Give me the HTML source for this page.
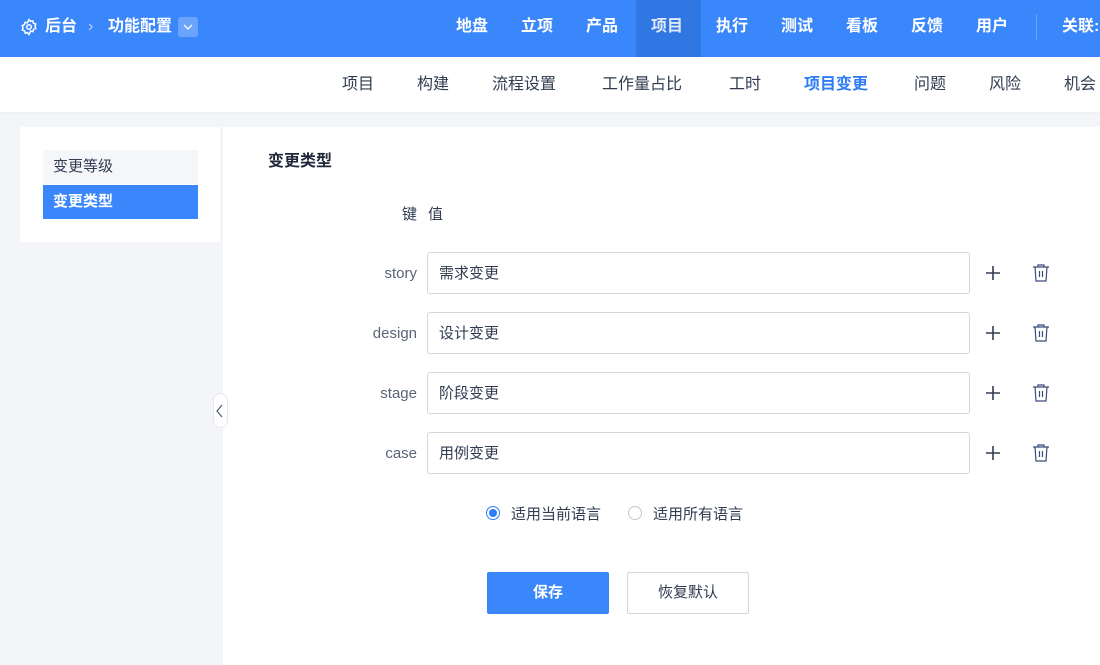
<!DOCTYPE html>
<html><head><meta charset="utf-8"><style>
*{box-sizing:border-box;margin:0;padding:0}
body{width:1100px;height:665px;overflow:hidden;background:#f4f5f8;font-family:"Liberation Sans","Noto Sans CJK SC",sans-serif;position:relative;color:#313c52}
.hd{position:absolute;left:0;top:0;width:1100px;height:57px;background:#3a86fb;color:#fff}
.hd .t{position:absolute;top:0;height:57px;line-height:54px;font-size:16px;font-weight:bold}
.sub{position:absolute;left:0;top:57px;width:1100px;height:55px;background:#fff;box-shadow:0 1px 3px rgba(0,0,0,.04)}
.sub span{position:absolute;top:0;line-height:55px;font-size:16px;color:#313c52}
.lp{position:absolute;left:20px;top:127px;width:200px;height:115px;background:#fff}
.mp{position:absolute;left:223px;top:127px;width:877px;height:538px;background:#fff}
.lbl{position:absolute;font-size:15px;color:#5a6476;text-align:right;width:120px}
.inp{position:absolute;left:427px;width:543px;height:42px;border:1px solid #d3d7de;border-radius:3px;font-size:15px;line-height:42px;padding-left:11px;color:#313c52}
.ic{position:absolute}
</style></head><body>
<div class="hd">
<svg class="ic" style="left:20px;top:18px" width="18" height="18" viewBox="0 0 24 24" fill="none" stroke="#fff" stroke-width="2"><circle cx="12" cy="12" r="3"/><path d="M12 2l2 2.5 3-.8.8 3L21 8l-1 3 1 3-3 1.2-.8 3-3-.8L12 22l-2-2.5-3 .8-.8-3L3 16l1-3-1-3 3-1.3.8-3 3 .8z"/></svg>
<div class="t" style="left:45px">后台</div>
<div class="t" style="left:88px;color:#b8d2fc;font-weight:normal">›</div>
<div class="t" style="left:108px">功能配置</div>
<div style="position:absolute;left:178px;top:17px;width:20px;height:20px;background:#6aa4fc;border-radius:3px"></div>
<svg class="ic" style="left:182px;top:22px" width="12" height="10" viewBox="0 0 12 10"><path d="M2 3l4 4 4-4" stroke="#fff" fill="none" stroke-width="1.3"/></svg>
<div style="position:absolute;left:636px;top:0;width:65px;height:57px;background:#3177e4"></div>
<div class="t" style="left:456px">地盘</div><div class="t" style="left:521px">立项</div><div class="t" style="left:586px">产品</div><div class="t" style="left:651px;color:#e0e8f8">项目</div><div class="t" style="left:716px">执行</div><div class="t" style="left:781px">测试</div><div class="t" style="left:846px">看板</div><div class="t" style="left:911px">反馈</div><div class="t" style="left:976px">用户</div>
<div style="position:absolute;left:1036px;top:14px;width:1px;height:26px;background:#6aa4fc"></div>
<div class="t" style="left:1062px">关联:</div>
</div>
<div class="sub">
<span style="left:342px">项目</span><span style="left:417px">构建</span><span style="left:492px">流程设置</span><span style="left:602px">工作量占比</span><span style="left:729px">工时</span><span style="left:804px;color:#2e7cf6;font-weight:bold">项目变更</span><span style="left:914px">问题</span><span style="left:989px">风险</span><span style="left:1064px">机会</span>
</div>
<div class="lp">
<div style="position:absolute;left:23px;top:23px;width:155px;height:34px;background:#f5f6fa;font-size:15px;line-height:34px;padding-left:10px">变更等级</div>
<div style="position:absolute;left:23px;top:58px;width:155px;height:34px;background:#3a86fb;color:#fff;font-size:15px;font-weight:bold;line-height:34px;padding-left:10px">变更类型</div>
</div>
<div class="mp">
<div style="position:absolute;left:45px;top:20px;font-size:16px;font-weight:bold;color:#1f2839">变更类型</div>
</div>
<div style="position:absolute;left:213px;top:393px;width:15px;height:35px;background:#fff;border:1px solid #e6e8ee;border-radius:8px"></div>
<svg class="ic" style="left:215px;top:403px" width="10" height="16" viewBox="0 0 10 16"><path d="M7 2L2 8l5 6" stroke="#5a6476" fill="none" stroke-width="1.3"/></svg>
<div class="lbl" style="left:297px;top:203px;color:#313c52">键</div>
<div style="position:absolute;left:428px;top:203px;font-size:15px">值</div>
<div class="lbl" style="left:297px;top:265px">story</div><div class="inp" style="top:252px">需求变更</div>
<div class="lbl" style="left:297px;top:325px">design</div><div class="inp" style="top:312px">设计变更</div>
<div class="lbl" style="left:297px;top:385px">stage</div><div class="inp" style="top:372px">阶段变更</div>
<div class="lbl" style="left:297px;top:445px">case</div><div class="inp" style="top:432px">用例变更</div>
<svg class="ic" style="left:984px;top:264px" width="18" height="200" viewBox="0 0 18 200" stroke="#313c52" stroke-width="1.6"><path d="M9 2v14M2 9h14M9 62v14M2 69h14M9 122v14M2 129h14M9 182v14M2 189h14"/></svg>
<svg class="ic" style="left:1031px;top:263px" width="20" height="200" viewBox="0 0 20 200" fill="none" stroke="#3a4a7a" stroke-width="1.2">
<g><path d="M2 4h16M7 4V2h6v2M4 4l1 14h10l1-14M8.5 8v6M11.5 8v6"/></g>
<g transform="translate(0,60)"><path d="M2 4h16M7 4V2h6v2M4 4l1 14h10l1-14M8.5 8v6M11.5 8v6"/></g>
<g transform="translate(0,120)"><path d="M2 4h16M7 4V2h6v2M4 4l1 14h10l1-14M8.5 8v6M11.5 8v6"/></g>
<g transform="translate(0,180)"><path d="M2 4h16M7 4V2h6v2M4 4l1 14h10l1-14M8.5 8v6M11.5 8v6"/></g>
</svg>
<div style="position:absolute;left:486px;top:506px;width:14px;height:14px;border-radius:50%;border:1px solid #2e7cf6"><div style="margin:2px;width:8px;height:8px;border-radius:50%;background:#2e7cf6"></div></div>
<div style="position:absolute;left:511px;top:503px;font-size:15px">适用当前语言</div>
<div style="position:absolute;left:628px;top:506px;width:14px;height:14px;border-radius:50%;border:1px solid #c4c8d0"></div>
<div style="position:absolute;left:653px;top:503px;font-size:15px">适用所有语言</div>
<div style="position:absolute;left:487px;top:572px;width:122px;height:42px;background:#3a86fb;border-radius:2px;color:#fff;font-size:15px;font-weight:bold;text-align:center;line-height:42px">保存</div>
<div style="position:absolute;left:627px;top:572px;width:122px;height:42px;background:#fff;border:1px solid #d3d7de;border-radius:2px;font-size:15px;text-align:center;line-height:40px">恢复默认</div>
</body></html>
